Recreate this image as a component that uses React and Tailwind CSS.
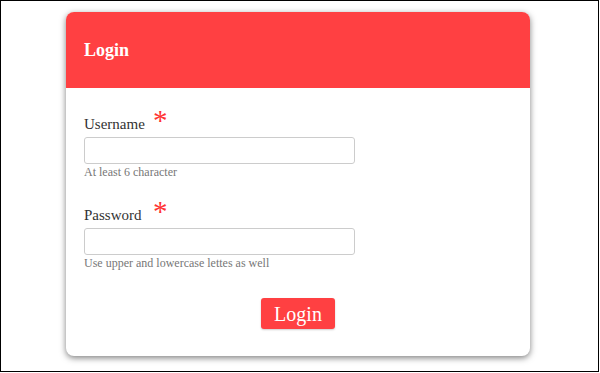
const Field = ({ label, hint, type }) => (
  <div className="flex flex-col">
    <div className="flex items-start h-[20px]">
      <span className="w-[69px] text-[15px] leading-[20px] text-[#333]">{label}</span>
      <span className="-mt-[4px] text-[29px] leading-[20px] text-[#f33]">*</span>
    </div>
    <input
      type={type}
      className="mt-[3px] w-[271px] h-[27px] rounded-[3px] border border-[#ccc] bg-white px-2 outline-none"
    />
    <span className="mt-[1px] h-[14px] text-[12px] leading-[14px] text-[#777]">{hint}</span>
  </div>
);

export default function App() {
  return (
    <div className="w-[599px] h-[372px] border border-black bg-white pl-[65px] pt-[11px] font-['Liberation_Serif',serif]">
      <div className="w-[464px] h-[344px] rounded-[8px] bg-white overflow-hidden shadow-[0_2px_6px_rgba(0,0,0,0.5)] flex flex-col">
        <div className="h-[76px] bg-[#ff4042] flex items-center px-[18px]">
          <h1 className="text-[18px] leading-none font-bold text-white">Login</h1>
        </div>
        <form className="flex flex-col px-[18px] pt-[26px]">
          <Field label="Username" hint="At least 6 character" type="text" />
          <div className="mt-[26px]">
            <Field label="Password" hint="Use upper and lowercase lettes as well" type="password" />
          </div>
          <div className="flex justify-center mt-[28px]">
            <button
              type="button"
              className="w-[74px] h-[31px] rounded-[3px] bg-[#ff4042] text-white text-[20px] leading-none shadow-[0_1px_2px_rgba(0,0,0,0.2)]"
            >
              Login
            </button>
          </div>
        </form>
      </div>
    </div>
  );
}
